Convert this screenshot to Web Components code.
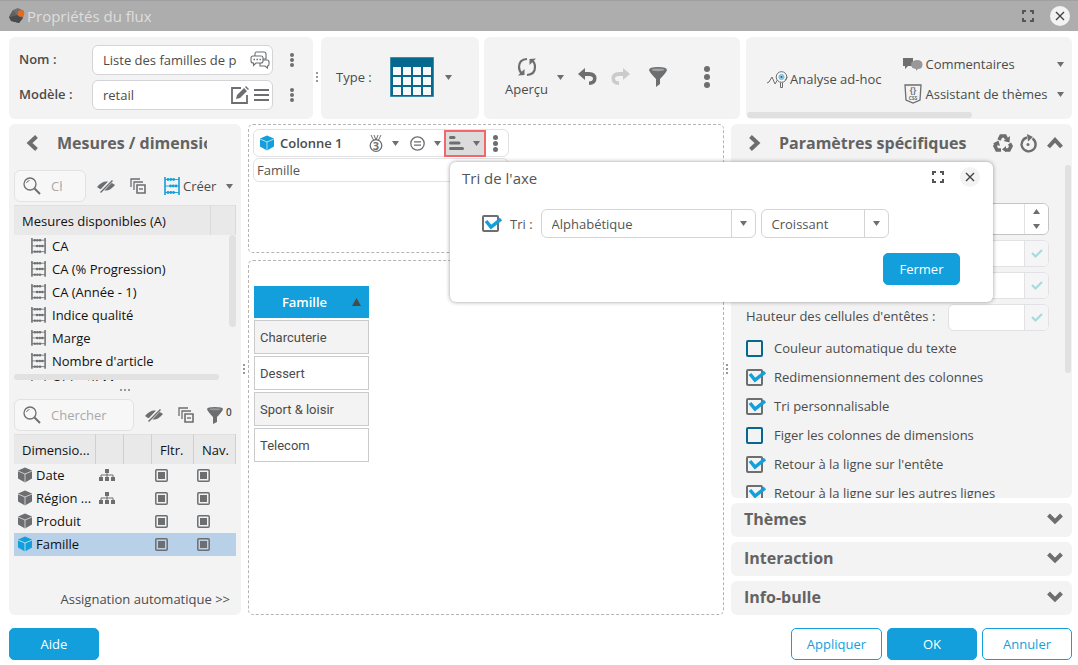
<!DOCTYPE html>
<html lang="fr">
<head>
<meta charset="utf-8">
<title>Propriétés du flux</title>
<style>
  :root {
    --blue: #129fdb; --teal: #06678f; --grey: #6d6e70; --text: #4b4b4b; --panel: #f3f3f3;
    --line: #d4d4d8; --soft: #e2e2e4;
  }
  * { box-sizing: border-box; }
  body { margin: 0; font: 13px/18px "Open Sans", sans-serif; color: var(--text); background: #fff; }
</style>
</head>
<body>
<flow-properties></flow-properties>
<script>
const BASE = `*{box-sizing:border-box}
button,input,select{font:inherit;color:inherit;margin:0}
button{border:0;background:none;padding:0;display:flex;align-items:center;cursor:pointer}
table{border-collapse:collapse}`;

function define(name, css, html, setup) {
  const tpl = document.createElement('template');
  tpl.innerHTML = `<style>${BASE}${css}</style>${html}`;
  customElements.define(name, class extends HTMLElement {
    constructor() {
      super();
      this.attachShadow({ mode: 'open' }).append(tpl.content.cloneNode(true));
    }
    connectedCallback() { if (setup && !this.ready) { this.ready = true; setup(this, this.shadowRoot); } }
  });
}

/* ---------- icons ---------- */
const beads = `<path d="M1 0V18M15 0V18" stroke="currentColor" stroke-width="1.600"/>
<path d="M1 2.500H15M1 9H15M1 15.500H15" stroke="currentColor" stroke-width=".9"/>
<g fill="currentColor"><circle cx="4" cy="2.500" r="1.400"/><circle cx="6.800" cy="2.500" r="1.400"/><circle cx="9.600" cy="2.500" r="1.400"/>
<circle cx="6.500" cy="9" r="1.400"/><circle cx="9.300" cy="9" r="1.400"/><circle cx="12.100" cy="9" r="1.400"/>
<circle cx="4" cy="15.500" r="1.400"/><circle cx="6.800" cy="15.500" r="1.400"/><circle cx="9.600" cy="15.500" r="1.400"/></g>`;
const ICONS = {
  logo: [16, 16, '<path d="M4 2 9 0 15 3 14 10 10 15 2 13 0 9Z" fill="#6f7072"/><path d="M0 9 8 7 14 10 10 15 2 13Z" fill="#4a4b4d"/><path d="M4 2 8 7 0 9Z" fill="#606163"/><circle cx="12" cy="5.500" r="3.300" fill="#e96a1c"/>'],
  expand: [12, 12, '<path d="M1 4V1H4M8 1H11V4M11 8V11H8M4 11H1V8" fill="none" stroke="#555" stroke-width="2"/>'],
  close: [20, 20, '<circle cx="10" cy="10" r="10" fill="#f3f3f3"/><path d="M6 6 14 14M14 6 6 14" stroke="#444" stroke-width="1.400"/>'],
  chat: [20, 18, '<g fill="#fff" stroke="currentColor" stroke-width="1.100"><path d="M6 1H14Q16 1 16 3V8H5V3Q5 1 6 1Z"/><path d="M10 9H17Q19 9 19 11V13Q19 15 17.500 15V17L15 15H10Z"/><path d="M3 5H11Q13 5 13 7V10Q13 12 11 12H6L3.500 14.500V12Q1 12 1 10V7Q1 5 3 5Z"/></g><path d="M3.500 8.500h1.500M6.500 8.500h1.500M9.500 8.500h1.500" stroke="currentColor" stroke-width="1.500"/>'],
  edit: [18, 18, '<path d="M10 2H1V17H16V9" fill="none" stroke="currentColor" stroke-width="1.800"/><path d="M5 13 6 9 13 2 16 5 9 12Z M14 1 15 0 18 3 17 4Z" fill="currentColor"/>'],
  menu: [16, 12, '<path d="M0 1H15M0 6H15M0 11H15" stroke="currentColor" stroke-width="1.800"/>'],
  dots: [4, 14, '<g fill="currentColor"><circle cx="2" cy="2" r="2"/><circle cx="2" cy="7" r="2"/><circle cx="2" cy="12" r="2"/></g>'],
  dotsbig: [6, 22, '<g fill="currentColor"><circle cx="3" cy="3" r="3"/><circle cx="3" cy="11" r="3"/><circle cx="3" cy="19" r="3"/></g>'],
  dotsmid: [5, 17, '<g fill="currentColor"><circle cx="2.500" cy="2.500" r="2.500"/><circle cx="2.500" cy="8.500" r="2.500"/><circle cx="2.500" cy="14.500" r="2.500"/></g>'],
  grip: [3, 11, '<path d="M0 0h2v2H0zM0 4h2v2H0zM0 8h2v2H0z" fill="#999"/>'],
  griph: [11, 3, '<path d="M0 0h2v2H0zM4 0h2v2H4zM8 0h2v2H8z" fill="#999"/>'],
  down: [7, 5, '<path d="M0 0H7L3.500 5Z" fill="currentColor"/>'],
  up: [7, 5, '<path d="M0 5H7L3.500 0Z" fill="currentColor"/>'],
  sorted: [9, 8, '<path d="M0 8H9L4.500 0Z" fill="#4a4a4a"/>'],
  grid: [44, 40, '<path d="M.5 .5H43.500V39.500H.5Z" fill="#06678f" stroke="#3d8aab"/><g fill="#f8f8f8"><path d="M3 10h8v8H3zM13 10h8v8h-8zM23 10h8v8h-8zM33 10h8v8h-8zM3 20h8v8H3zM13 20h8v8h-8zM23 20h8v8h-8zM33 20h8v8h-8zM3 30h8v8H3zM13 30h8v8h-8zM23 30h8v8h-8zM33 30h8v8h-8z"/></g>'],
  refresh: [20, 20, '<g fill="none" stroke="currentColor" stroke-width="2.200"><path d="M10 2Q2 2.500 2 10Q2 14 5 17"/><path d="M10 18Q18 17.500 18 10Q18 6 15 3"/></g><path d="M1 18.500 7.500 18V12Z" fill="currentColor"/><path d="M19 1.500 12.500 2V8Z" fill="currentColor"/>'],
  undo: [19, 18, '<path d="M7 0V4H11Q18.500 4 18.500 10.500 18.500 17 11 17V13.500Q15 13.500 15 10.500 15 8 11 8H7V12L0 6Z" fill="currentColor"/>'],
  redo: [19, 18, '<path d="M12 0V4H8Q.5 4 .5 10.500 .5 17 8 17V13.500Q4 13.500 4 10.500 4 8 8 8H12V12L19 6Z" fill="#cbcbcb"/>'],
  funnel: [18, 20, '<path d="M0 3Q0 0 9 0T18 3Q17 6 11 12V17L7 20V12Q1 6 0 3Z" fill="currentColor"/><ellipse cx="9" cy="2.800" rx="6.500" ry="1.400" fill="#a3a3a5"/>'],
  funnels: [16, 17, '<path d="M0 2Q0 0 8 0T16 2Q15 5 10 10V15L6 17V10Q1 5 0 2Z" fill="currentColor"/><ellipse cx="8" cy="2.200" rx="5.500" ry="1" fill="#98989a"/>'],
  analyse: [21, 17, '<path d="M0 12 2 11 5 6 8 13 11 8" fill="none" stroke="currentColor"/><circle cx="14.500" cy="6" r="5.300" fill="#fafafa" stroke="currentColor"/><circle cx="14.500" cy="6" r="2.600" fill="#9bd3ec" stroke="#6bbbe0"/><circle cx="14.500" cy="6" r="1.100" fill="#555"/><path d="M13.500 11.500V16.500H15.500V11.500M18 9 20.500 6" fill="none" stroke="currentColor"/>'],
  comments: [20, 13, '<path d="M0 0H10V8H5L2 11V8H0Z" fill="currentColor"/><path d="M14 2Q19.500 2 19.500 6.500T15 11L13 13V11Q8 10.500 8 6.500T14 2Z" fill="#98989a"/>'],
  css: [18, 20, '<path d="M1 1H17L16 16 9 19 2 16Z" fill="none" stroke="currentColor" stroke-width="1.300"/><g font-family="Open Sans" font-weight="700" fill="currentColor" text-anchor="middle"><text x="9" y="9" font-size="8">{}</text><text x="9" y="15.500" font-size="5">CSS</text></g>'],
  left: [12, 16, '<path d="M10.500 1.500 3.500 8 10.500 14.500" fill="none" stroke="currentColor" stroke-width="4"/>'],
  right: [12, 16, '<path d="M1.500 1.500 8.500 8 1.500 14.500" fill="none" stroke="currentColor" stroke-width="4"/>'],
  chevup: [16, 12, '<path d="M1.500 10 8 3 14.500 10" fill="none" stroke="currentColor" stroke-width="4"/>'],
  chevdown: [16, 12, '<path d="M1.500 2 8 8.500 14.500 2" fill="none" stroke="currentColor" stroke-width="4"/>'],
  recycle: [20, 18, '<path d="M6 6 8 2H12L13.500 5" fill="none" stroke="currentColor" stroke-width="3.600"/><path d="M16.500 9.500 18 12 16 16H12" fill="none" stroke="currentColor" stroke-width="3.600"/><path d="M8 16H4L2 12 3.500 9.500" fill="none" stroke="currentColor" stroke-width="3.600"/><path d="M10.500 7 16.500 8.500 17 2ZM13 12V18L9 15.500ZM0 9.500 5.500 6.500 7 12Z" fill="currentColor"/>'],
  reset: [18, 19, '<path d="M13.500 4.500A7 7 0 1 1 8 3.500" fill="none" stroke="currentColor" stroke-width="2.400"/><path d="M8 0 14 3 9 7.500Z" fill="currentColor"/><circle cx="9" cy="10.500" r="1.500" fill="currentColor"/>'],
  search: [18, 18, '<circle cx="7" cy="7" r="6" fill="none" stroke="currentColor" stroke-width="1.300"/><path d="M11.500 11.500 17 17" stroke="currentColor" stroke-width="2"/><path d="M3.500 6Q4 4 6.500 3.500" fill="none" stroke="currentColor"/>'],
  eye: [18, 14, '<path d="M0 8Q5 2 10 2.500T18 6Q13 12 8 11.500T0 8Z" fill="currentColor"/><path d="M3 13.500 15.500 .5" stroke="#f3f3f3" stroke-width="3.500"/><path d="M3.500 13.500 15.500 1.500" stroke="currentColor" stroke-width="1.400"/>'],
  copies: [16, 16, '<path d="M1 9V1H10M4 12V4H13" fill="none" stroke="currentColor" stroke-width="1.300"/><path d="M7 7H15V15H7Z" fill="none" stroke="currentColor" stroke-width="1.600"/><path d="M9 11H13" stroke="currentColor" stroke-width="1.400"/>'],
  abacus: [16, 18, beads],
  measure: [15, 16, `<g transform="scale(.94 .88)">${beads}</g>`],
  cube: [14, 16, '<path d="M7 .5 14 3.500V11.500L7 15.500 0 11.500V3.500Z" fill="currentColor"/><path d="M0 4 7 7 14 4M7 7V15.500" stroke="#fff" stroke-opacity=".65" fill="none"/>'],
  tree: [16, 12, '<g fill="currentColor"><path d="M6 0h4v4H6zM0 8h4v4H0zM6 8h4v4H6zM12 8h4v4h-4z"/></g><path d="M8 4V8M2 8V6H14V8" fill="none" stroke="currentColor"/>'],
  square: [13, 13, '<rect x=".8" y=".8" width="11.400" height="11.400" rx="1" fill="none" stroke="currentColor" stroke-width="1.500"/><path d="M3 3h7v7H3z" fill="currentColor"/>'],
  medal: [14, 17, '<path d="M2 0 5 6M5 0 7 5M9 0 7 5M12 0 9 6" stroke="currentColor" stroke-width="1"/><circle cx="7" cy="10.500" r="5.800" fill="none" stroke="currentColor" stroke-width="1.300"/><text x="7" y="14.500" font-family="Open Sans" font-weight="700" font-size="11" text-anchor="middle" fill="currentColor">3</text>'],
  equal: [15, 15, '<circle cx="7.500" cy="7.500" r="6.700" fill="none" stroke="currentColor" stroke-width="1.300"/><path d="M4 5.800H11M4 9.200H11" stroke="currentColor" stroke-width="1.300"/>'],
  sort: [15, 14, '<path d="M1.500 1.500H5M1.500 7H10M1.500 12.500H13.500" stroke="currentColor" stroke-width="3" stroke-linecap="round"/>'],
  tick: [12, 9, '<path d="M1 4 4.500 7.500 11 1" fill="none" stroke="#a6d9dc" stroke-width="2"/>'],
};
define('ui-icon', ':host{display:block;flex:none;color:var(--icon,#6d6e70)}svg{display:block;overflow:visible}', '', (el, root) => {
  const [w, h, body] = ICONS[el.getAttribute('name')];
  root.innerHTML += `<svg width="${w}" height="${h}" viewBox="0 0 ${w} ${h}" aria-hidden="true">${body}</svg>`;
});

/* ---------- controls ---------- */
define('ui-button', `:host{display:block}
button{width:100%;min-width:90px;height:32px;padding:0 15px;justify-content:center;border:1px solid var(--blue);border-radius:5px;background:var(--blue);color:#fff}
:host([compact]) button{min-width:77px}
:host([outline]) button{background:#fff;color:var(--blue)}`, '<button type="button"><slot></slot></button>');

define('ui-check', `:host{display:block}
label{display:flex;align-items:center;gap:8px}
.box{display:grid;width:20px;align-items:center}
input{appearance:none;grid-area:1/1;width:17px;height:17px;border:2px solid var(--teal);border-radius:2px}
input:checked{border-color:var(--grey)}
svg{grid-area:1/1;visibility:hidden;pointer-events:none}
input:checked+svg{visibility:visible}`,
`<label><span class="box"><input type="checkbox"><svg width="20" height="18" viewBox="0 0 20 18"><path d="M4 6 9 12 19 4" fill="none" stroke="#129fdb" stroke-width="3.500"/></svg></span><slot></slot></label>`,
(el, root) => { root.querySelector('input').checked = el.hasAttribute('checked'); });

define('ui-select', `:host{display:block}
.wrap{display:grid;grid-template-columns:1fr 24px;height:29px;border:1px solid var(--line);border-radius:6px;background:#fff}
select{appearance:none;grid-area:1/1/2/3;border:0;background:none;padding:0 24px 0 10px;width:100%}
.arrow{grid-area:1/2;display:grid;place-items:center;border-left:1px solid var(--line);pointer-events:none}`,
`<div class="wrap"><select><option></option></select><span class="arrow"><ui-icon name="down"></ui-icon></span></div>`,
(el, root) => { root.querySelector('option').textContent = el.getAttribute('value'); root.querySelector('select').setAttribute('aria-label', el.getAttribute('label')); });

define('ui-search', `:host{display:block}
div{display:flex;align-items:center;gap:10px;height:32px;padding:0 23px 0 8px;border:1px solid var(--soft);border-radius:6px;background:#f7f7f7}
input{flex:1;width:0;min-width:0;padding:0;border:0;background:none}
input::placeholder{color:#a9a9a9;opacity:1}`,
`<div><ui-icon name="search"></ui-icon><input type="text" placeholder="Chercher" aria-label="Chercher"></div>`);

define('ui-field', `:host{display:grid;grid-template-columns:63px 1fr 18px;align-items:center;column-gap:10px}
label{font-weight:600;padding-bottom:2px}
.box{display:flex;align-items:center;gap:5px;height:30px;padding:0 2px 0 10px;border:1px solid var(--line);border-radius:6px;background:#fff}
input{flex:1;width:0;min-width:0;padding:0;border:0;background:none}
.more{justify-content:center}`,
`<label for="f"></label><div class="box"><input id="f" type="text"><slot></slot></div><button class="more" aria-label="Options"><ui-icon name="dots"></ui-icon></button>`,
(el, root) => { root.querySelector('label').textContent = el.getAttribute('label'); root.querySelector('input').value = el.getAttribute('value'); });

define('ui-size', `:host{display:flex;justify-content:space-between;align-items:center;height:27px}
:host([spin]){height:32px}
label{padding-bottom:3px}
.box{display:grid;grid-template-columns:1fr 24px;width:101px;height:100%;border:1px solid var(--soft);border-radius:6px;background:#fff;overflow:hidden}
:host([spin]) .box{border-color:#c4c4c6}
input{border:0;width:100%;padding:0 8px;background:none}
.side{display:grid;place-items:center;background:#f5f5f5;border-left:1px solid var(--soft)}
:host([spin]) .side{background:#fff}
button{justify-content:center;width:100%;height:100%}`,
`<label for="n"></label><div class="box"><input id="n" type="text"><div class="side"></div></div>`,
(el, root) => {
  const text = el.getAttribute('label') || '';
  root.querySelector('label').textContent = text;
  if (!text) root.querySelector('input').setAttribute('aria-label', 'Taille');
  root.querySelector('.side').innerHTML = el.hasAttribute('spin')
    ? '<button aria-label="Plus"><ui-icon name="up"></ui-icon></button><button aria-label="Moins"><ui-icon name="down"></ui-icon></button>'
    : '<button aria-label="Valider"><ui-icon name="tick"></ui-icon></button>';
});

define('panel-box', ':host{display:block;background:var(--panel);border-radius:6px;min-width:0}', '<slot></slot>');

define('accordion-bar', `:host{display:block;background:var(--panel);border-radius:6px}
button{width:100%;height:34px;padding:0 9px 2px 13px;justify-content:space-between;color:#636363}
h2{margin:0;font-size:16px;line-height:22px}`,
'<button><h2><slot></slot></h2><ui-icon name="chevdown"></ui-icon></button>');

/* ---------- regions ---------- */
define('title-bar', `:host{display:flex;align-items:center;height:31px;padding:0 8px 0 9px;background:#adadad;border-top:1px solid #a0a0a0}
h1{flex:1;margin:0 0 0 2px;font-size:15px;line-height:20px;font-weight:400;color:#dedede}
button+button{margin-left:16px}`,
`<ui-icon name="logo"></ui-icon><h1><slot></slot></h1>
<button aria-label="Agrandir"><ui-icon name="expand"></ui-icon></button><button aria-label="Fermer"><ui-icon name="close"></ui-icon></button>`);

define('tool-bar', `:host{display:grid;grid-template-columns:304px 8px 158px minmax(0,267fr) minmax(0,326fr);padding:6px 6px 5px 9px;height:93px}
panel-box{height:82px;display:flex;align-items:center;padding-bottom:2px}
.names{flex-direction:column;align-items:stretch;justify-content:center;gap:5px;padding:0 12px 2px 10px}
.split{display:grid;place-items:center;padding-bottom:2px}
.type{padding-left:15px;gap:11px}.type ui-icon:first-of-type{margin-left:7px}
.acts{margin:0 6px 0 5px;padding-left:21px}
.acts .preview{flex-direction:column;gap:3px;margin-right:9px}
.acts .b1{margin-left:14px}.acts .b2{margin-left:14px}.acts .b3{margin-left:19px}.acts .b4{margin-left:37px}
.links{padding:2px 8px 0 21px;gap:22px;position:relative}
.links button{gap:2px;white-space:nowrap}
.pair{flex:1;display:grid;gap:4px}
.pair button{width:100%;height:26px}
.pair .lead{width:20px;display:grid;place-items:center}
.pair .txt{flex:1;text-align:left}
.bar{position:absolute;left:1px;bottom:1px;width:69%;height:6px;border-radius:3px;background:#e0e0e0}`,
`<panel-box class="names"><ui-field label="Nom :" value="Liste des familles de p"><ui-icon name="chat"></ui-icon></ui-field>
<ui-field label="Modèle :" value="retail"><ui-icon name="edit"></ui-icon><ui-icon name="menu"></ui-icon></ui-field></panel-box>
<div class="split"><ui-icon name="grip"></ui-icon></div>
<panel-box class="type"><span>Type :</span><ui-icon name="grid"></ui-icon><ui-icon name="down"></ui-icon></panel-box>
<panel-box class="acts"><button class="preview"><ui-icon name="refresh"></ui-icon><span>Aperçu</span></button><ui-icon name="down"></ui-icon>
<button class="b1" aria-label="Annuler"><ui-icon name="undo"></ui-icon></button><button class="b2" aria-label="Rétablir"><ui-icon name="redo"></ui-icon></button>
<button class="b3" aria-label="Filtrer"><ui-icon name="funnel"></ui-icon></button><button class="b4" aria-label="Options"><ui-icon name="dotsbig"></ui-icon></button></panel-box>
<panel-box class="links"><button><ui-icon name="analyse"></ui-icon>Analyse ad-hoc</button>
<div class="pair"><button><span class="lead"><ui-icon name="comments"></ui-icon></span><span class="txt">Commentaires</span><ui-icon name="down"></ui-icon></button>
<button><span class="lead"><ui-icon name="css"></ui-icon></span><span class="txt">Assistant de thèmes</span><ui-icon name="down"></ui-icon></button></div><div class="bar"></div></panel-box>`);

define('measure-table', `:host{display:block;position:relative;height:176px;overflow:hidden;color:#111}
table{width:100%;table-layout:fixed}
th{height:29px;padding:2px 0 0 8px;text-align:left;font-weight:400;background:#e9e9e9;border-top:1px solid #e0e0e0;border-right:1px solid #dadada}
th:last-child{width:25px}
td{height:23px;padding:0 0 0 17px;white-space:nowrap}
td div{display:flex;align-items:center;gap:6px}
.v,.h{position:absolute;border-radius:4px;background:#e1e1e1}
.v{right:0;top:30px;width:7px;height:92px}
.h{left:0;right:17px;bottom:1px;height:6px}`,
`<table><thead><tr><th>Mesures disponibles (A)</th><th></th></tr></thead><tbody></tbody></table><div class="v"></div><div class="h"></div>`,
(el, root) => {
  root.querySelector('tbody').innerHTML = ['CA', 'CA (% Progression)', 'CA (Année - 1)', 'Indice qualité', 'Marge', "Nombre d'article", 'Objectif Marge']
    .map(t => `<tr><td colspan="2"><div><ui-icon name="measure"></ui-icon>${t}</div></td></tr>`).join('');
});

define('dimension-table', `:host{display:block;color:#111}
table{width:100%;table-layout:fixed}
th{height:29px;padding:2px 0 0 8px;text-align:left;font-weight:400;background:#e9e9e9;border-top:1px solid #e0e0e0;border-right:1px solid #cfcfcf}
th:nth-child(2),th:nth-child(3){width:28px}th:nth-child(4),th:nth-child(5){width:42px}
td{height:23px;padding:0 0 0 3px;white-space:nowrap}
td:first-child{padding-left:4px}
td div{display:flex;align-items:center;gap:4px}
.sel{background:#b9d1e8;--icon:var(--grey)}.sel td:first-child{--icon:var(--blue)}`,
`<table><thead><tr><th>Dimensio...</th><th></th><th></th><th>Fltr.</th><th>Nav.</th></tr></thead><tbody></tbody></table>`,
(el, root) => {
  root.querySelector('tbody').innerHTML = [['Date', 1], ['Région ...', 1], ['Produit'], ['Famille', 0, 1]]
    .map(([t, tree, sel]) => `<tr class="${sel ? 'sel' : ''}"><td><div><ui-icon name="cube"></ui-icon>${t}</div></td><td>${tree ? '<ui-icon name="tree"></ui-icon>' : ''}</td><td></td><td><ui-icon name="square"></ui-icon></td><td><ui-icon name="square"></ui-icon></td></tr>`).join('');
});

define('data-panel', `:host{display:flex;flex-direction:column;padding:0 5px;background:var(--panel);border-radius:6px;min-width:0}
header{display:flex;align-items:center;gap:19px;height:38px;padding:0 29px 0 12px}
h2{flex:1;min-width:0;margin:0;overflow:hidden;white-space:nowrap;font-size:16px;line-height:22px;color:#636363}
.row{display:flex;align-items:center}
.one{margin:8px 0 3px}.one ui-search{width:72px}
.two{margin-bottom:3px}.two ui-search{width:120px}
.row button{margin-left:11px}.row .copy{margin-left:15px}
.row .create{margin-left:18px;gap:3px}.create ui-icon:first-child{--icon:var(--blue)}.create ui-icon:last-child{margin-left:7px}
.row .filter{margin-left:13px;gap:3px;align-items:flex-start;font-size:10px;line-height:10px;font-weight:600}
.split{display:grid;place-items:center;height:18px}
.auto{margin-top:auto;padding:0 6px 7px;text-align:right}
a{color:inherit;text-decoration:none}`,
`<header><button aria-label="Replier"><ui-icon name="left"></ui-icon></button><h2>Mesures / dimensions</h2></header>
<div class="row one"><ui-search></ui-search><button aria-label="Masquer"><ui-icon name="eye"></ui-icon></button><button class="copy" aria-label="Réduire"><ui-icon name="copies"></ui-icon></button><button class="create"><ui-icon name="abacus"></ui-icon>Créer<ui-icon name="down"></ui-icon></button></div>
<measure-table></measure-table>
<div class="split"><ui-icon name="griph"></ui-icon></div>
<div class="row two"><ui-search></ui-search><button aria-label="Masquer"><ui-icon name="eye"></ui-icon></button><button class="copy" aria-label="Réduire"><ui-icon name="copies"></ui-icon></button><button class="filter"><ui-icon name="funnels"></ui-icon>0</button></div>
<dimension-table></dimension-table>
<div class="auto"><a href="#">Assignation automatique &gt;&gt;</a></div>`);

define('axis-dialog', `:host{display:block;width:543px;height:140px;border-radius:6px;background:#fff;box-shadow:0 0 4px rgba(0,0,0,.4);color:#555}
header{display:flex;align-items:center;height:30px;padding:0 13px 0 12px}
h2{flex:1;margin:0;padding-top:1px;font-size:15px;line-height:20px;font-weight:400}
header button+button{margin-left:16px}
.row{display:flex;align-items:center;gap:5px;margin:17px 0 15px;padding-left:32px}
.row ui-check{margin-right:3px}
.long{width:215px}.short{width:128px}
.foot{display:flex;justify-content:flex-end;padding-right:33px}`,
`<header><h2>Tri de l'axe</h2><button aria-label="Agrandir"><ui-icon name="expand"></ui-icon></button><button aria-label="Fermer"><ui-icon name="close"></ui-icon></button></header>
<div class="row"><ui-check checked>Tri :</ui-check><ui-select class="long" value="Alphabétique" label="Tri"></ui-select><ui-select class="short" value="Croissant" label="Ordre"></ui-select></div>
<div class="foot"><ui-button compact>Fermer</ui-button></div>`);

define('column-editor', `:host{display:flex;flex-direction:column;gap:7px;min-width:0;position:relative}
section{border:1px dashed #b4b4b4;border-radius:5px}
.cols{height:129px;padding:4px}
.data{flex:1;padding:25px 5px}
.card,.item{width:256px;border:1px solid var(--soft);border-radius:6px;display:flex;align-items:center}
.card{height:28px;padding-left:6px}
.card b{font-weight:600;margin:0 26px 0 6px;white-space:nowrap}
.card .g{gap:9px;margin-right:11px}
.card .sort{gap:9px;height:27px;width:42px;flex:none;justify-content:center;background:#dcdcdc;border:2px solid #f0686c;margin:0 7px 0 -8px}
.cube{--icon:var(--blue)}
.item{height:24px;margin-top:1px;padding-left:3px;color:#555}
axis-dialog{position:absolute;z-index:2;left:202px;top:38px}
table{width:115px;border-collapse:separate;border-spacing:0 2px;margin-top:-2px}
th{height:32px;padding:0 8px 0 3px;background:var(--blue);color:#fff;font-weight:600}
th div{display:grid;grid-template-columns:1fr 9px;align-items:center}
td{height:34px;padding:2px 5px 0;border:1px solid #c9cbce;font-family:Roboto,sans-serif}
tr:nth-child(odd) td{background:var(--panel)}`,
`<section class="cols"><div class="card"><ui-icon class="cube" name="cube"></ui-icon><b>Colonne 1</b>
<button class="g" aria-label="Classement"><ui-icon name="medal"></ui-icon><ui-icon name="down"></ui-icon></button><button class="g" aria-label="Condition"><ui-icon name="equal"></ui-icon><ui-icon name="down"></ui-icon></button>
<button class="sort" aria-label="Tri"><ui-icon name="sort"></ui-icon><ui-icon name="down"></ui-icon></button><button aria-label="Options"><ui-icon name="dotsmid"></ui-icon></button></div>
<div class="item">Famille</div></section>
<section class="data"><table><thead><tr><th><div>Famille<ui-icon name="sorted"></ui-icon></div></th></tr></thead>
<tbody><tr><td>Charcuterie</td></tr><tr><td>Dessert</td></tr><tr><td>Sport &amp; loisir</td></tr><tr><td>Telecom</td></tr></tbody></table></section>
<axis-dialog></axis-dialog>`);

define('settings-panel', `:host{display:flex;flex-direction:column;gap:5px;min-width:0}
.main{flex:1 1 0px;min-height:0;display:flex;flex-direction:column;overflow:hidden;position:relative}
header{display:flex;align-items:center;height:38px;flex:none;padding:0 9px 0 18px}
h2{flex:1;margin:0 0 0 18px;white-space:nowrap;font-size:16px;line-height:22px;color:#636363}
header button+button{margin-left:6px}header button:last-child{margin-left:10px}
.body{display:flex;flex-direction:column;flex:none;gap:5px;padding:41px 23px 0 15px}
.checks{display:grid;gap:11px;padding-top:3px}
.bar{position:absolute;right:1px;top:41px;width:6px;height:208px;border-radius:3px;background:#e1e1e1}`,
`<panel-box class="main"><header><button aria-label="Replier"><ui-icon name="right"></ui-icon></button><h2>Paramètres spécifiques</h2><button aria-label="Recycler"><ui-icon name="recycle"></ui-icon></button><button aria-label="Réinitialiser"><ui-icon name="reset"></ui-icon></button><button aria-label="Fermer la section"><ui-icon name="chevup"></ui-icon></button></header>
<div class="body"><ui-size spin></ui-size><ui-size></ui-size><ui-size></ui-size><ui-size label="Hauteur des cellules d'entêtes :"></ui-size>
<div class="checks"><ui-check>Couleur automatique du texte</ui-check><ui-check checked>Redimensionnement des colonnes</ui-check><ui-check checked>Tri personnalisable</ui-check><ui-check>Figer les colonnes de dimensions</ui-check><ui-check checked>Retour à la ligne sur l'entête</ui-check><ui-check checked>Retour à la ligne sur les autres lignes</ui-check></div></div><div class="bar"></div></panel-box>
<accordion-bar>Thèmes</accordion-bar><accordion-bar>Interaction</accordion-bar><accordion-bar>Info-bulle</accordion-bar>`);

define('flow-properties', `:host{display:flex;flex-direction:column;min-height:100vh}
main{flex:1;display:grid;grid-template-columns:232px 7px minmax(0,1fr) 7px 341px;padding:0 6px 0 9px}
.split{display:grid;place-items:center}
column-editor{z-index:1}
footer{display:flex;gap:5px;padding:13px 6px 5px 9px}
.help{margin-right:auto}`,
`<title-bar>Propriétés du flux</title-bar><tool-bar></tool-bar>
<main><data-panel></data-panel><div class="split"><ui-icon name="grip"></ui-icon></div><column-editor></column-editor><div class="split"><ui-icon name="grip"></ui-icon></div><settings-panel></settings-panel></main>
<footer><ui-button class="help">Aide</ui-button><ui-button outline>Appliquer</ui-button><ui-button>OK</ui-button><ui-button outline>Annuler</ui-button></footer>`);
</script>
</body>
</html>
